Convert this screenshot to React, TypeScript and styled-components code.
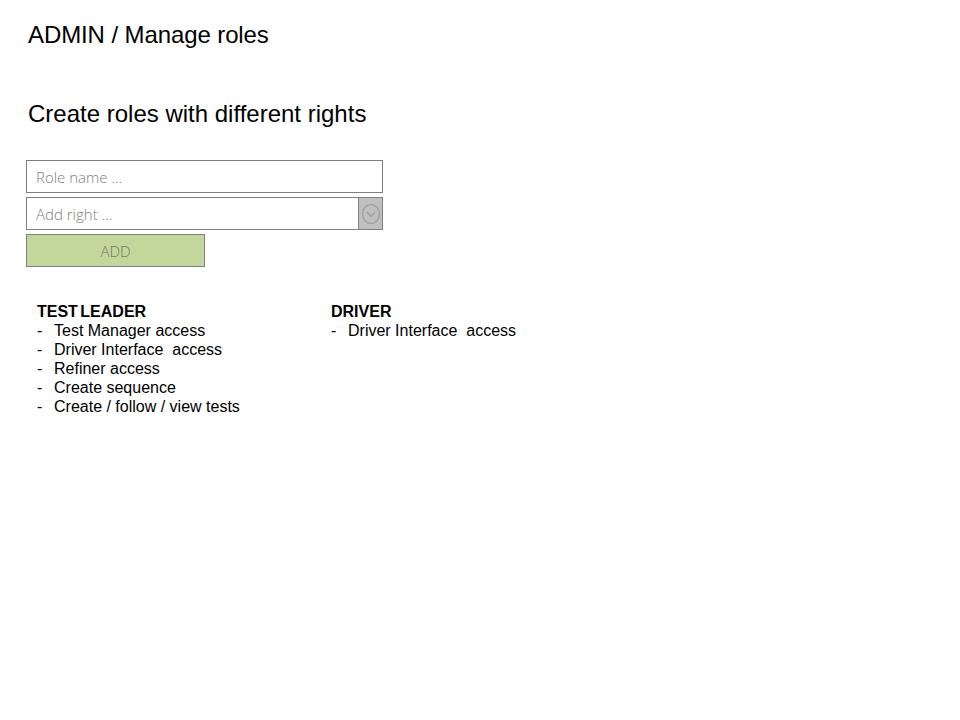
import React from "react";
import styled, { createGlobalStyle } from "styled-components";

interface RoleI {
  id: string;
  name: string;
  rights: string[];
}

const roles: RoleI[] = [
  {
    id: "test-leader",
    name: "TEST LEADER",
    rights: [
      "Test Manager access",
      "Driver Interface  access",
      "Refiner access",
      "Create sequence",
      "Create / follow / view tests",
    ],
  },
  {
    id: "driver",
    name: "DRIVER",
    rights: ["Driver Interface  access"],
  },
];

const GlobalStyle = createGlobalStyle`
  body {
    margin: 0;
    background: #ffffff;
    font-family: "Liberation Sans", Arial, sans-serif;
    color: #000000;
  }
`;

const App: React.FC = () => {
  return (
    <>
      <GlobalStyle />
      <Page>
        <Breadcrumb>ADMIN / Manage roles</Breadcrumb>
        <Heading>Create roles with different rights</Heading>
        <Form>
          <Field>
            <Input type="text" placeholder="Role name ..." />
          </Field>
          <Field>
            <Input type="text" placeholder="Add right ..." />
            <DropButton aria-label="open rights">
              <svg width="20" height="22" viewBox="0 0 20 22">
                <ellipse
                  cx="10"
                  cy="11"
                  rx="8.5"
                  ry="9.5"
                  fill="none"
                  stroke="#a3a3a3"
                  strokeWidth="1.6"
                />
                <path
                  d="M6 9 L10 13.5 L14 9"
                  fill="none"
                  stroke="#a3a3a3"
                  strokeWidth="1.8"
                />
              </svg>
            </DropButton>
          </Field>
          <AddButton>ADD</AddButton>
        </Form>
        <Roles>
          {roles.map((role) => (
            <RoleBlock key={role.id}>
              <RoleName>{role.name}</RoleName>
              {role.rights.map((right) => (
                <RightRow key={right}>
                  <Dash>-</Dash>
                  <RightText>{right}</RightText>
                </RightRow>
              ))}
            </RoleBlock>
          ))}
        </Roles>
      </Page>
    </>
  );
};

const Page = styled.div`
  width: 960px;
  height: 720px;
  box-sizing: border-box;
  padding: 20px 0 0 28px;
`;

const Breadcrumb = styled.h1`
  margin: 0;
  font-size: 24px;
  font-weight: normal;
  line-height: 30px;
  white-space: pre;
  letter-spacing: -0.1px;
`;

const Heading = styled.h2`
  margin: 49px 0 0 0;
  font-size: 24px;
  font-weight: normal;
  line-height: 30px;
`;

const Form = styled.div`
  display: flex;
  flex-direction: column;
  gap: 4px;
  margin: 31px 0 0 -2px;
  width: 357px;
`;

const Field = styled.div`
  display: flex;
  height: 33px;
  box-sizing: border-box;
  border: 1px solid #7f7f7f;
  background: #ffffff;
`;

const Input = styled.input`
  flex: 1;
  min-width: 0;
  border: none;
  outline: none;
  padding: 0 9px;
  background: transparent;
  font-family: "Open Sans", sans-serif;
  font-weight: 300;
  font-size: 15px;
  color: #333333;

  &::placeholder {
    color: #808080;
  }
`;

const DropButton = styled.button`
  display: flex;
  align-items: center;
  justify-content: center;
  width: 24px;
  padding: 0;
  border: none;
  border-left: 1px solid #7f7f7f;
  background: #c0c0c0;
  cursor: pointer;
`;

const AddButton = styled.button`
  width: 179px;
  height: 33px;
  box-sizing: border-box;
  border: 1px solid #7f7f7f;
  background: #c3d69b;
  font-family: "Open Sans", sans-serif;
  font-weight: 300;
  font-size: 15px;
  color: #707a60;
  cursor: pointer;
`;

const Roles = styled.div`
  display: grid;
  grid-template-columns: 294px 294px;
  margin: 35px 0 0 9px;
`;

const RoleBlock = styled.div`
  display: flex;
  flex-direction: column;
`;

const RoleName = styled.div`
  font-size: 16px;
  font-weight: bold;
  line-height: 19px;
  word-spacing: -2px;
`;

const RightRow = styled.div`
  display: flex;
  font-size: 16px;
  line-height: 19px;
`;

const Dash = styled.span`
  width: 17px;
`;

const RightText = styled.span`
  white-space: pre;
`;

export default App;
